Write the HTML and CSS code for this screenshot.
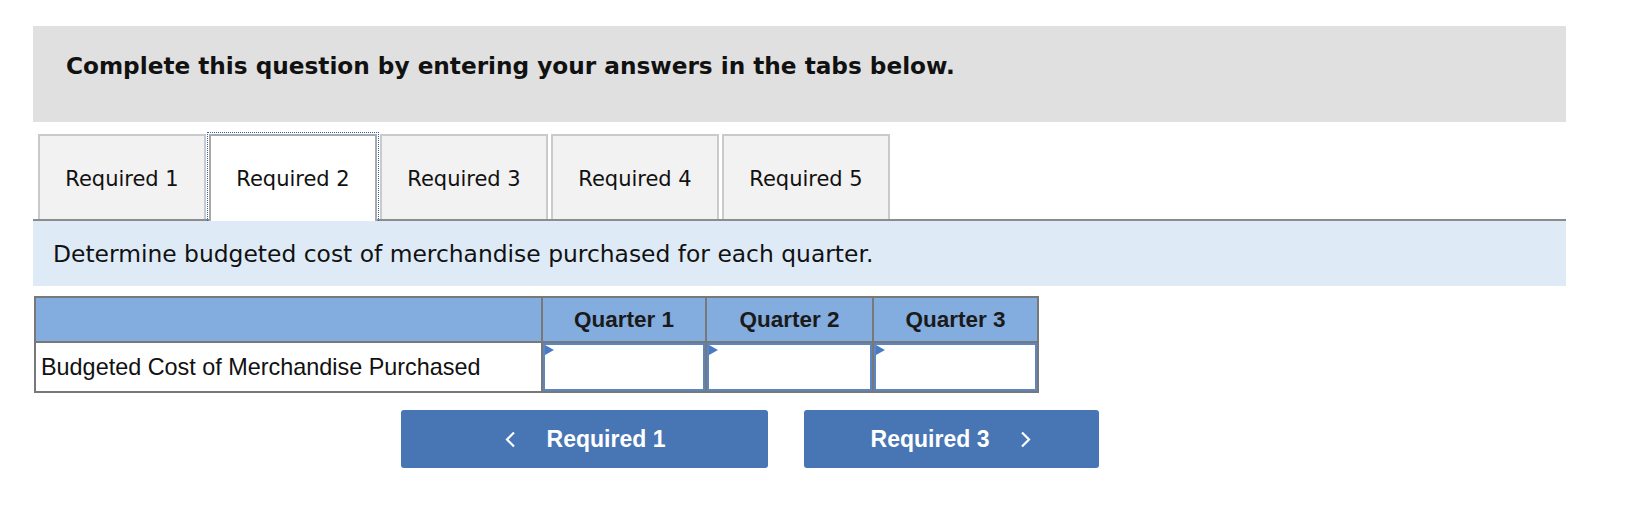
FILE: index.html
```html
<!DOCTYPE html>
<html lang="en">
<head>
<meta charset="utf-8">
<title>Required 2</title>
<link rel="stylesheet" href="styles.css">
</head>
<body>
<div class="page">
  <div class="prompt">Complete this question by entering your answers in the tabs below.</div>
  <div class="tabs">
    <div class="tab">Required 1</div>
    <div class="tab active">Required 2</div>
    <div class="tab">Required 3</div>
    <div class="tab">Required 4</div>
    <div class="tab">Required 5</div>
  </div>
  <div class="instruction">Determine budgeted cost of merchandise purchased for each quarter.</div>
  <table class="grid">
    <colgroup>
      <col class="c-label">
      <col class="c-q1">
      <col class="c-q2">
      <col class="c-q3">
    </colgroup>
    <thead>
      <tr>
        <th></th>
        <th>Quarter 1</th>
        <th>Quarter 2</th>
        <th>Quarter 3</th>
      </tr>
    </thead>
    <tbody>
      <tr>
        <td class="label">Budgeted Cost of Merchandise Purchased</td>
        <td class="cell"><div class="input"><span class="flag"></span></div></td>
        <td class="cell"><div class="input"><span class="flag"></span></div></td>
        <td class="cell"><div class="input"><span class="flag"></span></div></td>
      </tr>
    </tbody>
  </table>
  <div class="nav">
    <button class="btn prev" type="button">
      <svg class="chev" width="12" height="17" viewBox="0 0 12 17"><path d="M10 1.5 L3 8.5 L10 15.5" fill="none" stroke="#fff" stroke-width="2.2"/></svg>
      <span>Required 1</span>
    </button>
    <button class="btn next" type="button">
      <span>Required 3</span>
      <svg class="chev" width="12" height="17" viewBox="0 0 12 17"><path d="M2 1.5 L9 8.5 L2 15.5" fill="none" stroke="#fff" stroke-width="2.2"/></svg>
    </button>
  </div>
</div>
</body>
</html>
```

FILE: styles.css
```css
html, body {
  margin: 0;
  padding: 0;
  background: #ffffff;
}

.page {
  width: 1533px;
  margin-left: 33px;
  padding-top: 26px;
  font-family: "DejaVu Sans", Verdana, sans-serif;
  color: #111;
}

.prompt {
  box-sizing: border-box;
  height: 96px;
  background: #e0e0e0;
  padding: 26px 0 0 33px;
  font-size: 23.2px;
  font-weight: bold;
  color: #111;
  line-height: 27px;
}

.tabs {
  display: flex;
  align-items: flex-end;
  gap: 3px;
  margin-top: 12px;
  padding-left: 5px;
  border-bottom: 2px solid #8c8c8c;
  height: 85px;
}

.tab {
  box-sizing: border-box;
  width: 168px;
  height: 85px;
  background: #f2f2f2;
  border: 2px solid #cacaca;
  border-bottom: none;
  padding-top: 31px;
  text-align: center;
  font-size: 21px;
  line-height: 24px;
  color: #111;
}

.tab.active {
  position: relative;
  z-index: 1;
  background: #ffffff;
  border-color: #a9a9a9;
  height: 87px;
  margin-bottom: -2px;
}

.tab.active::before {
  content: "";
  position: absolute;
  left: -4px;
  right: -4px;
  top: -4px;
  bottom: 0;
  border: 1px dotted #2f62b0;
  border-bottom: none;
}

.instruction {
  box-sizing: border-box;
  height: 65px;
  background: #deebf7;
  padding: 20px 0 0 20px;
  font-size: 23.4px;
  line-height: 27px;
  color: #111;
}

.grid {
  margin-top: 10px;
  margin-left: 1px;
  border-collapse: collapse;
  table-layout: fixed;
  width: 1003px;
  font-family: "Liberation Sans", Arial, sans-serif;
  border: 2px solid #787878;
}

.c-label { width: 507px; }
.c-q1 { width: 164px; }
.c-q2 { width: 167px; }
.c-q3 { width: 165px; }

.grid th {
  height: 45px;
  box-sizing: border-box;
  background: #83acdf;
  border: 2px solid #787878;
  font-size: 22.5px;
  font-weight: bold;
  color: #1a1a1a;
  text-align: center;
  vertical-align: middle;
  padding: 0;
}

.grid td {
  border: 2px solid #787878;
  height: 50px;
  box-sizing: border-box;
  padding: 0;
  vertical-align: middle;
}

.grid td.label {
  padding-left: 5px;
  font-size: 23.4px;
  color: #111;
  white-space: nowrap;
}

.grid td.cell {
  padding: 0;
}

.input {
  position: relative;
  box-sizing: border-box;
  height: 48px;
  background: #fff;
  border: 2px solid #5b86c4;
}

.flag {
  position: absolute;
  left: 0;
  top: 0;
  width: 0;
  height: 0;
  border-left: 9px solid #4a7bc2;
  border-top: 5px solid transparent;
  border-bottom: 5px solid transparent;
}

.nav {
  display: flex;
  gap: 36px;
  margin-top: 17px;
  padding-left: 368px;
}

.btn {
  display: flex;
  align-items: center;
  justify-content: center;
  gap: 31px;
  height: 58px;
  border: none;
  border-radius: 3px;
  background: #4875b4;
  color: #fff;
  font-family: "Liberation Sans", Arial, sans-serif;
  font-size: 23px;
  font-weight: bold;
  padding: 0;
}

.btn.prev { width: 367px; }
.btn.next { width: 295px; }

.chev {
  display: block;
}
```
